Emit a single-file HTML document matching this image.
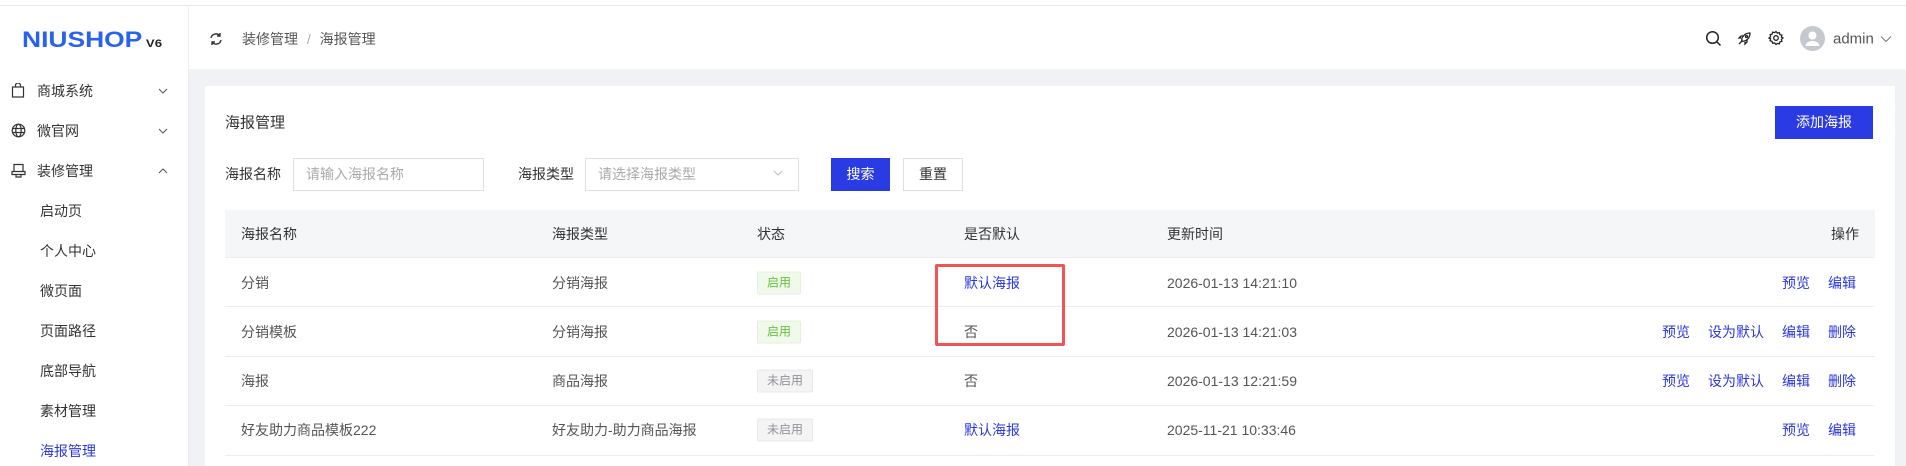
<!DOCTYPE html>
<html><head><meta charset="utf-8"><style>
*{margin:0;padding:0;box-sizing:border-box}
body{width:1906px;height:466px;overflow:hidden;background:#f0f2f5;font-family:"Liberation Sans","Noto Sans CJK SC",sans-serif;font-size:14px;color:#333;position:relative}
.a{position:absolute;white-space:nowrap}
.c{transform:translateY(-50%)}
.blue{color:#2a36e0}
.side{left:0;top:6px;width:189px;height:460px;background:#fff;border-right:1px solid #eceef2}
.hdr{left:189px;top:6px;width:1717px;height:63px;background:#fff}
.top{left:0;top:0;width:1906px;height:6px;background:#fff;border-bottom:1px solid #e4e5e8}
.card{left:205px;top:86px;width:1690px;height:380px;background:#fff}
.inp{border:1px solid #dcdfe6;background:#fff;color:#aaa;padding-left:12px;line-height:30px;height:33px}
.btn{height:33px;line-height:31px;text-align:center;border:1px solid #dcdfe6}
.tag{height:23px;line-height:21px;font-size:12px;padding:0 9px;border-radius:2px}
.g{background:#f0f9eb;border:1px solid #e1f3d8;color:#67c23a}
.n{background:#f4f4f5;border:1px solid #e9e9eb;color:#909399}
.line{left:225px;width:1650px;height:1px;background:#ebeef5}
.t{color:#555}
</style></head><body>
<div class="a top"></div>
<div class="a side"></div>
<div class="a hdr"></div>
<div class="a" style="left:22px;top:27px;font-size:22px;font-weight:bold;color:#2a62f0;transform:scaleX(1.2);transform-origin:left center;font-family:'Liberation Sans',sans-serif">NIUSHOP<span style="font-size:11px;color:#222;margin-left:3px">V6</span></div>

<!-- sidebar -->
<svg class="a" style="left:11px;top:83px" width="14" height="15" viewBox="0 0 14 15" fill="none" stroke="#333" stroke-width="1.2"><rect x="1.5" y="4" width="11" height="10"/><path d="M4.5 4V2.5a2.5 2.5 0 015 0V4"/></svg>
<div class="a c" style="left:37px;top:91px">商城系统</div>
<svg class="a" style="left:158px;top:87px" width="10" height="8"><path d="M1 2l4 4 4-4" stroke="#555" fill="none"/></svg>
<svg class="a" style="left:11px;top:123px" width="15" height="15" viewBox="0 0 15 15" fill="none" stroke="#333" stroke-width="1.2"><circle cx="7.5" cy="7.5" r="6.3"/><ellipse cx="7.5" cy="7.5" rx="2.7" ry="6.3"/><path d="M1.2 5.5h12.6M1.2 9.5h12.6"/></svg>
<div class="a c" style="left:37px;top:131px">微官网</div>
<svg class="a" style="left:158px;top:127px" width="10" height="8"><path d="M1 2l4 4 4-4" stroke="#555" fill="none"/></svg>
<svg class="a" style="left:11px;top:163px" width="15" height="15" viewBox="0 0 15 15" fill="none" stroke="#333" stroke-width="1.2"><path d="M3 1.5h9v7H3zM1 8.5h13v3H1zM5 11.5v2.5h5v-2.5"/></svg>
<div class="a c" style="left:37px;top:171px">装修管理</div>
<svg class="a" style="left:158px;top:167px" width="10" height="8"><path d="M1 6l4-4 4 4" stroke="#555" fill="none"/></svg>
<div class="a c" style="left:40px;top:211px">启动页</div>
<div class="a c" style="left:40px;top:251px">个人中心</div>
<div class="a c" style="left:40px;top:291px">微页面</div>
<div class="a c" style="left:40px;top:331px">页面路径</div>
<div class="a c" style="left:40px;top:371px">底部导航</div>
<div class="a c" style="left:40px;top:411px">素材管理</div>
<div class="a c blue" style="left:40px;top:451px">海报管理</div>

<!-- header -->
<svg class="a" style="left:209px;top:32px" width="14" height="14" viewBox="0 0 14 14" fill="none" stroke="#333" stroke-width="1.4"><path d="M2 6a5 5 0 019-2M12 8a5 5 0 01-9 2"/><path d="M11 1v3H8M3 13v-3h3"/></svg>
<div class="a c" style="left:242px;top:39px;color:#555">装修管理 <span style="color:#aaa;margin:0 5px">/</span> 海报管理</div>
<svg class="a" style="left:1705px;top:30px" width="17" height="17" viewBox="0 0 17 17" fill="none" stroke="#222" stroke-width="1.5"><circle cx="7.5" cy="7.5" r="5.8"/><path d="M12 12l3.5 3.5"/></svg>
<svg class="a" style="left:1737px;top:31px" width="15" height="15" viewBox="0 0 15 15" fill="none" stroke="#222" stroke-width="1.3"><path d="M5 10C4 7 7 2 13 2c0 6-5 9-8 8zM5 10l-3 3M4 7L2 7 4 5h3M8 11v2l2-2V8"/><circle cx="9.5" cy="5.5" r="1"/></svg>
<svg class="a" style="left:1768px;top:30px" width="16" height="16" viewBox="0 0 16 16" fill="none" stroke="#222" stroke-width="1.3"><path d="M8 1.5l1.3 1.6 2-.5.6 2 2 .6-.5 2L15 8l-1.6 1.3.5 2-2 .6-.6 2-2-.5L8 14.5l-1.3-1.6-2 .5-.6-2-2-.6.5-2L1 8l1.6-1.3-.5-2 2-.6.6-2 2 .5z"/><circle cx="8" cy="8" r="2.3"/></svg>
<svg class="a" style="left:1800px;top:26px" width="25" height="25" viewBox="0 0 25 25"><circle cx="12.5" cy="12.5" r="12.5" fill="#c5c8ce"/><circle cx="12.5" cy="9.5" r="4" fill="#fff"/><path d="M5.5 20a7 5 0 0114 0z" fill="#fff"/></svg>
<div class="a c" style="left:1833px;top:39px;font-size:15px;color:#555">admin</div>
<svg class="a" style="left:1880px;top:35px" width="12" height="8"><path d="M1 1.5l5 5 5-5" stroke="#777" fill="none"/></svg>

<!-- card -->
<div class="a card"></div>
<div class="a c" style="left:225px;top:122px;font-size:15px;color:#333">海报管理</div>
<div class="a btn" style="left:1775px;top:106px;width:98px;background:#2b3be3;border-color:#2b3be3;color:#fff;line-height:31px">添加海报</div>

<div class="a c" style="left:225px;top:174px">海报名称</div>
<div class="a inp" style="left:293px;top:158px;width:191px">请输入海报名称</div>
<div class="a c" style="left:518px;top:174px">海报类型</div>
<div class="a inp" style="left:585px;top:158px;width:214px">请选择海报类型</div>
<svg class="a" style="left:773px;top:170px" width="10" height="7"><path d="M1 1l4 4 4-4" stroke="#bbb" fill="none"/></svg>
<div class="a btn" style="left:831px;top:158px;width:59px;background:#2b3be3;border-color:#2b3be3;color:#fff">搜索</div>
<div class="a btn" style="left:903px;top:158px;width:60px;background:#fff;color:#333">重置</div>

<div class="a" style="left:225px;top:210px;width:1650px;height:47px;background:#f5f6f8"></div>
<div class="a c" style="left:241px;top:234px">海报名称</div>
<div class="a c" style="left:552px;top:234px">海报类型</div>
<div class="a c" style="left:757px;top:234px">状态</div>
<div class="a c" style="left:964px;top:234px">是否默认</div>
<div class="a c" style="left:1167px;top:234px">更新时间</div>
<div class="a c" style="left:1831px;top:234px">操作</div>
<div class="a line" style="top:257px"></div>
<div class="a line" style="top:306px"></div>
<div class="a line" style="top:356px"></div>
<div class="a line" style="top:405px"></div>
<div class="a line" style="top:455px"></div>

<!-- row1 -->
<div class="a c t" style="left:241px;top:283px">分销</div>
<div class="a c t" style="left:552px;top:283px">分销海报</div>
<div class="a c tag g" style="left:757px;top:283px">启用</div>
<div class="a c blue" style="left:964px;top:283px">默认海报</div>
<div class="a c t" style="left:1167px;top:283px">2026-01-13 14:21:10</div>
<div class="a c blue" style="left:1782px;top:283px">预览</div>
<div class="a c blue" style="left:1828px;top:283px">编辑</div>
<!-- row2 -->
<div class="a c t" style="left:241px;top:332px">分销模板</div>
<div class="a c t" style="left:552px;top:332px">分销海报</div>
<div class="a c tag g" style="left:757px;top:332px">启用</div>
<div class="a c t" style="left:964px;top:332px">否</div>
<div class="a c t" style="left:1167px;top:332px">2026-01-13 14:21:03</div>
<div class="a c blue" style="left:1662px;top:332px">预览</div>
<div class="a c blue" style="left:1708px;top:332px">设为默认</div>
<div class="a c blue" style="left:1782px;top:332px">编辑</div>
<div class="a c blue" style="left:1828px;top:332px">删除</div>
<!-- row3 -->
<div class="a c t" style="left:241px;top:381px">海报</div>
<div class="a c t" style="left:552px;top:381px">商品海报</div>
<div class="a c tag n" style="left:757px;top:381px">未启用</div>
<div class="a c t" style="left:964px;top:381px">否</div>
<div class="a c t" style="left:1167px;top:381px">2026-01-13 12:21:59</div>
<div class="a c blue" style="left:1662px;top:381px">预览</div>
<div class="a c blue" style="left:1708px;top:381px">设为默认</div>
<div class="a c blue" style="left:1782px;top:381px">编辑</div>
<div class="a c blue" style="left:1828px;top:381px">删除</div>
<!-- row4 -->
<div class="a c t" style="left:241px;top:430px">好友助力商品模板222</div>
<div class="a c t" style="left:552px;top:430px">好友助力-助力商品海报</div>
<div class="a c tag n" style="left:757px;top:430px">未启用</div>
<div class="a c blue" style="left:964px;top:430px">默认海报</div>
<div class="a c t" style="left:1167px;top:430px">2025-11-21 10:33:46</div>
<div class="a c blue" style="left:1782px;top:430px">预览</div>
<div class="a c blue" style="left:1828px;top:430px">编辑</div>

<div class="a" style="left:935px;top:264px;width:130px;height:82px;border:3px solid #f25454;border-radius:2px"></div>
</body></html>
